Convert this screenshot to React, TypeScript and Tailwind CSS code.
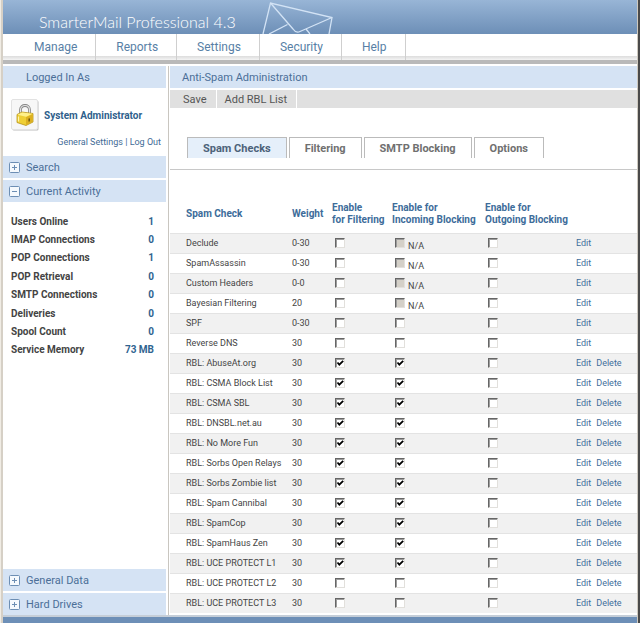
import { useState } from 'react'
import type { ReactNode } from 'react'
import clsx from 'clsx'

const MENU = ['Manage', 'Reports', 'Settings', 'Security', 'Help']

const TABS = ['Spam Checks', 'Filtering', 'SMTP Blocking', 'Options']

const ACTIVITY = [
  ['Users Online', '1'],
  ['IMAP Connections', '0'],
  ['POP Connections', '1'],
  ['POP Retrieval', '0'],
  ['SMTP Connections', '0'],
  ['Deliveries', '0'],
  ['Spool Count', '0'],
  ['Service Memory', '73 MB'],
]

interface SpamCheck {
  name: string
  weight: string
  filtering?: boolean
  incoming?: boolean | 'na'
  removable?: boolean
}

function rbl(name: string, enabled = true): SpamCheck {
  return { name: `RBL: ${name}`, weight: '30', filtering: enabled, incoming: enabled, removable: true }
}

const CHECKS: SpamCheck[] = [
  { name: 'Declude', weight: '0-30', incoming: 'na' },
  { name: 'SpamAssassin', weight: '0-30', incoming: 'na' },
  { name: 'Custom Headers', weight: '0-0', incoming: 'na' },
  { name: 'Bayesian Filtering', weight: '20', incoming: 'na' },
  { name: 'SPF', weight: '0-30' },
  { name: 'Reverse DNS', weight: '30' },
  rbl('AbuseAt.org'),
  rbl('CSMA Block List'),
  rbl('CSMA SBL'),
  rbl('DNSBL.net.au'),
  rbl('No More Fun'),
  rbl('Sorbs Open Relays'),
  rbl('Sorbs Zombie list'),
  rbl('Spam Cannibal'),
  rbl('SpamCop'),
  rbl('SpamHaus Zen'),
  rbl('UCE PROTECT L1'),
  rbl('UCE PROTECT L2', false),
  rbl('UCE PROTECT L3', false),
]

function Envelope() {
  return (
    <svg viewBox="0 0 72 34" className="h-[34px] w-[72px]" fill="none" stroke="#d3e3f5" strokeWidth="1.3" aria-hidden="true">
      <path d="M1 34 8.500 3 70 17.500 67 34" />
      <path d="M8.500 3 31 29Q34 33.500 38 31.500L70 17.500" />
      <path d="M7 34 25.500 24.500M44 29 48 34" />
    </svg>
  )
}

function Padlock() {
  return (
    <svg viewBox="0 0 28 32" className="h-8 w-7 shrink-0" aria-hidden="true">
      <rect x="1.500" y="1.500" width="26" height="30" rx="1.500" fill="#bdbdbd" />
      <rect x="0.500" y="0.500" width="26" height="30" rx="1.500" fill="#f7f7f7" stroke="#e2e2e2" />
      <path d="M9.500 15V11C9.500 5 18.500 5 18.500 11V16" fill="none" stroke="#858585" strokeWidth="2.800" />
      <path d="M9.500 15V11C9.500 5 18.500 5 18.500 11V16" fill="none" stroke="#e4e4e4" strokeWidth="1.200" />
      <path d="M6 15.500 11 13l11 1.500v8.500l-7 3.500-9-3z" fill="#efcf35" stroke="#b8941a" strokeWidth="0.800" />
      <path d="M6.500 15.700 11 13.500l10.500 1.300-6.500 3z" fill="#fff08a" />
      <path d="M15 18.300 21.600 15.200V22.700L15 26z" fill="#dcb022" />
      <path d="M7.500 17.500v5" stroke="#fff6ae" strokeWidth="1.200" />
      <path d="M17.500 19.500h1.500l-.3 3h-1.200z" fill="#5c4a10" />
    </svg>
  )
}

function SectionHeader({ children, open }: { children: ReactNode; open?: boolean }) {
  return (
    <button
      type="button"
      aria-expanded={!!open}
      className="flex h-[22px] w-full items-center gap-[6px] bg-[#d5e3f4] pl-[6px] text-left text-[11px] text-[#4b6f98]"
    >
      <svg viewBox="0 0 11 11" className="size-[11px]" fill="none" stroke="#6c8eb4" aria-hidden="true">
        <rect x="0.500" y="0.500" width="10" height="10" rx="1" fill="#f5f9fd" />
        <path d={open ? 'M3 5.500h5' : 'M3 5.500h5M5.500 3v5'} />
      </svg>
      <span className="pt-[2px]">{children}</span>
    </button>
  )
}

function Checkbox({ label, checked, disabled }: { label: string; checked?: boolean; disabled?: boolean }) {
  return (
    <span className="relative block size-[10px]">
      <input
        type="checkbox"
        aria-label={label}
        defaultChecked={checked}
        disabled={disabled}
        className="peer block size-[10px] appearance-none border border-t-[#666666] border-r-[#e2e0dc] border-b-[#e2e0dc] border-l-[#666666] bg-white shadow-[inset_1px_1px_#9c9c9c] disabled:bg-[#d4d0c8]"
      />
      <svg
        viewBox="0 0 10 10"
        className="pointer-events-none absolute inset-0 hidden size-[10px] peer-checked:block"
        fill="none"
        stroke="#000000"
        strokeWidth="1.800"
        aria-hidden="true"
      >
        <path d="M2.500 4.500 4.300 6.700 8.200 2.800" />
      </svg>
    </span>
  )
}

function Sidebar() {
  return (
    <aside className="flex w-[166px] shrink-0 flex-col border-r border-[#c9c6c0] pr-[2px]">
      <h2 className="flex h-[22px] items-center bg-[#d5e3f4] pt-[2px] pl-[23px] text-[11px] text-[#4b6f98]">Logged In As</h2>
      <div className="flex h-[68px] flex-col pt-[11px] pr-[5px] pl-[8px]">
        <div className="flex items-center gap-[5px]">
          <Padlock />
          <strong className="text-[10px] text-[#2f5f8c]">System Administrator</strong>
        </div>
        <p className="mt-[4px] text-right text-[9px] leading-[14px] whitespace-nowrap text-[#3f6b96]">
          <a href="#settings">General Settings</a> | <a href="#logout">Log Out</a>
        </p>
      </div>
      <div className="space-y-[2px]">
        <SectionHeader>Search</SectionHeader>
        <SectionHeader open>Current Activity</SectionHeader>
      </div>
      <dl className="mt-[10px] flex h-[147px] flex-col pr-[12px] pl-[8px] text-[10px] font-bold">
        {ACTIVITY.map(([label, value]) => (
          <div key={label} className="flex flex-1 items-center justify-between">
            <dt className="text-[#444444]">{label}</dt>
            <dd className="text-[#2f6490]">{value}</dd>
          </div>
        ))}
      </dl>
      <div className="mt-auto space-y-[2px]">
        <SectionHeader>General Data</SectionHeader>
        <SectionHeader>Hard Drives</SectionHeader>
      </div>
    </aside>
  )
}

function ChecksTable() {
  return (
    <table className="w-full table-fixed border-collapse text-left text-[9px] text-[#444444]">
      <colgroup>
        <col className="w-[122px]" />
        <col className="w-[40px]" />
        <col className="w-[60px]" />
        <col className="w-[93px]" />
        <col className="w-[91px]" />
        <col />
      </colgroup>
      <thead>
        <tr className="h-[38px] text-[10px] leading-[12px] whitespace-nowrap text-[#3d6c9a]">
          <th scope="col" className="pl-[16px]">Spam Check</th>
          <th scope="col">Weight</th>
          <th scope="col">Enable<br />for Filtering</th>
          <th scope="col">Enable for<br />Incoming Blocking</th>
          <th scope="col">Enable for<br />Outgoing Blocking</th>
          <td />
        </tr>
      </thead>
      <tbody>
        {CHECKS.map((c) => (
          <tr key={c.name} className="h-5 border-t border-[#e3e3e3] leading-[12px] whitespace-nowrap odd:bg-[#f1f1f1]">
            <td className="pl-[16px]">{c.name}</td>
            <td>{c.weight}</td>
            <td className="pl-[3px]">
              <Checkbox label={`${c.name}: enable for filtering`} checked={c.filtering} />
            </td>
            <td className="pl-[3px]">
              <div className="flex h-[14px] items-center gap-[3px]">
                <Checkbox
                  label={`${c.name}: enable for incoming blocking`}
                  checked={c.incoming === true}
                  disabled={c.incoming === 'na'}
                />
                {c.incoming === 'na' && <span className="self-end leading-[8px]">N/A</span>}
              </div>
            </td>
            <td className="pl-[3px]">
              <Checkbox label={`${c.name}: enable for outgoing blocking`} />
            </td>
            <td className="text-[#3f6f9c]">
              <a href="#edit">Edit</a>
              {c.removable && <a href="#delete" className="ml-[5px]">Delete</a>}
            </td>
          </tr>
        ))}
      </tbody>
    </table>
  )
}

export default function App() {
  const [tab, setTab] = useState(TABS[0])

  return (
    <div className="flex min-h-screen flex-col border-r-2 border-l border-r-[#4a4a4a] border-l-[#f0ece4] bg-white font-['Roboto','Liberation_Sans',sans-serif]">
      <div className="flex flex-1 flex-col border-r border-l-2 border-r-[#cfcac0] border-l-[#d6d0c6]">
        <header className="flex h-[34px] bg-linear-to-b from-[#98b5d6] to-[#6d8fb7]">
          <div className="flex gap-[26px] pl-[36px]">
            <h1 className="pt-[10px] font-['Lato',sans-serif] text-[16px] leading-[24px] font-light whitespace-nowrap text-white">
              SmarterMail Professional 4.3
            </h1>
            <Envelope />
          </div>
        </header>
        <nav className="border-b-4 border-[#b9b9b9]">
          <ul className="flex h-[26px] bg-linear-to-b from-white from-85% via-[#dddddd] via-85% to-[#f4f4f4] text-[12px] text-[#587fa6]">
            {MENU.map((item) => (
              <li key={item} className="flex border-r border-[#cfcfcf] pr-[18px] pl-[20px] first:pl-[31px]">
                <a href="#menu" className="leading-[27px]">{item}</a>
              </li>
            ))}
          </ul>
        </nav>
        <div className="flex flex-1 pt-[2px]">
          <Sidebar />
          <main className="min-w-0 flex-1 pl-px">
            <h2 className="flex h-[22px] items-center bg-[#d5e3f4] pt-[2px] pl-[12px] text-[11px] text-[#4b6f98]">
              Anti-Spam Administration
            </h2>
            <div className="mt-[2px] flex h-[18px] bg-[#e0e0e0] text-[11px] text-[#555555]">
              <button type="button" className="border-r border-white pt-[2px] pr-[9px] pl-[13px]">Save</button>
              <button type="button" className="border-r border-white pt-[2px] pr-[9px] pl-[8px]">Add RBL List</button>
            </div>
            <div role="tablist" className="mt-[29px] flex h-[33px] items-start gap-[2px] border-b border-[#c8c8c8] pl-[17px]">
              {TABS.map((t) => (
                <button
                  key={t}
                  type="button"
                  role="tab"
                  aria-selected={t === tab}
                  onClick={() => setTab(t)}
                  className={clsx(
                    'h-[21px] border border-b-0 border-[#bbbbbb] px-[15px] pt-[2px] text-[11px] font-bold whitespace-nowrap',
                    t === tab ? 'bg-[#e5effa] text-[#4d6279]' : 'bg-white text-[#707070]',
                  )}
                >
                  {t}
                </button>
              ))}
            </div>
            <div className="pt-[25px] pb-[2px]">
              <ChecksTable />
            </div>
          </main>
        </div>
        <footer className="h-2 border-t-2 border-[#c5ced8] bg-[#6d8fb7]" />
      </div>
    </div>
  )
}
